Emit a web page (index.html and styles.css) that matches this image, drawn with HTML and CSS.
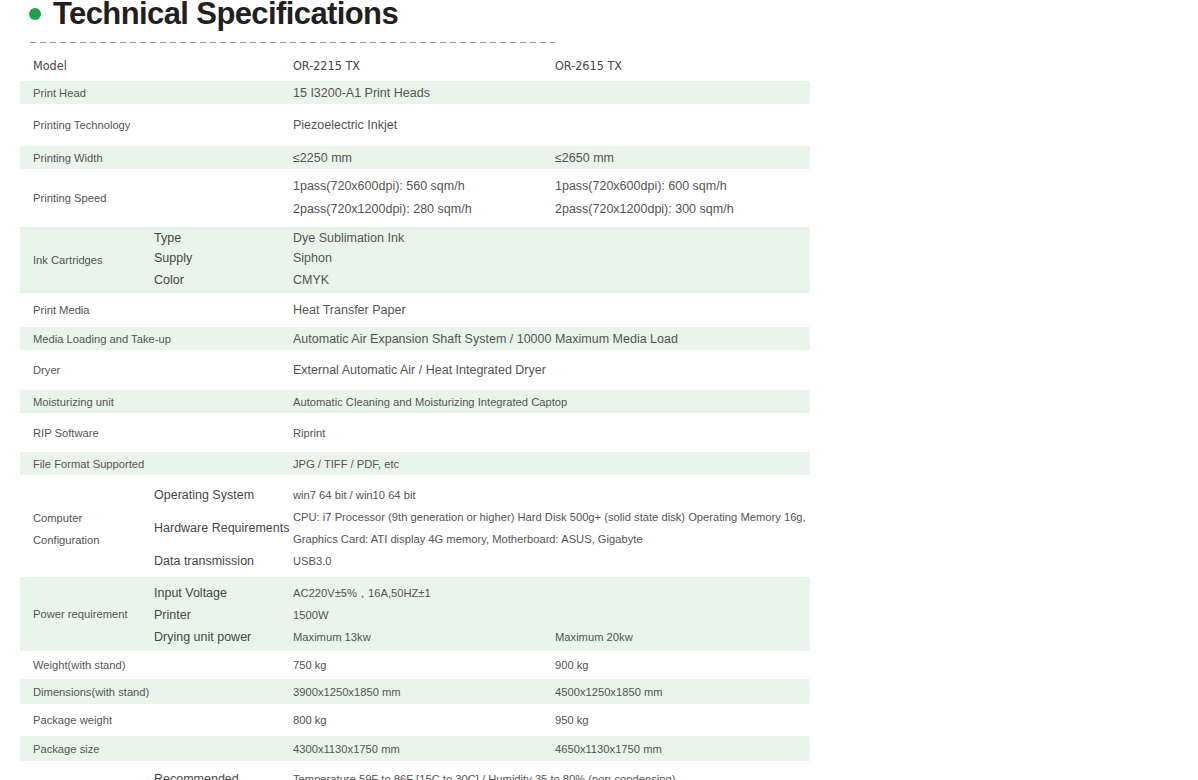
FILE: index.html
```html
<!DOCTYPE html>
<html lang="en">
<head>
<meta charset="utf-8">
<title>Technical Specifications</title>
<link rel="stylesheet" href="styles.css">
</head>
<body>
<header class="head">
  <span class="dot"></span>
  <h1 class="title">Technical Specifications</h1>
</header>
<div class="rule"></div>
<table class="spec">
  <colgroup>
    <col class="c-label"><col class="c-sub"><col class="c-val"><col class="c-val2">
  </colgroup>
  <tbody>
    <tr class="r-model">
      <td colspan="2" class="lbl">Model</td>
      <td class="val">OR-2215 TX</td>
      <td class="val2">OR-2615 TX</td>
    </tr>
    <tr class="g r23">
      <td colspan="2" class="lbl">Print Head</td>
      <td colspan="2" class="val lg">15 I3200-A1 Print Heads</td>
    </tr>
    <tr class="r42">
      <td colspan="2" class="lbl">Printing Technology</td>
      <td colspan="2" class="val lg">Piezoelectric Inkjet</td>
    </tr>
    <tr class="g r23">
      <td colspan="2" class="lbl">Printing Width</td>
      <td class="val lg">≤2250 mm</td>
      <td class="val2 lg">≤2650 mm</td>
    </tr>
    <tr class="r58 two">
      <td colspan="2" class="lbl">Printing Speed</td>
      <td class="val lg">1pass(720x600dpi): 560 sqm/h<br>2pass(720x1200dpi): 280 sqm/h</td>
      <td class="val2 lg">1pass(720x600dpi): 600 sqm/h<br>2pass(720x1200dpi): 300 sqm/h</td>
    </tr>
    <tr class="g r21">
      <td rowspan="3" class="lbl">Ink Cartridges</td>
      <td class="sub">Type</td>
      <td colspan="2" class="val lg">Dye Sublimation Ink</td>
    </tr>
    <tr class="g r19">
      <td class="sub">Supply</td>
      <td colspan="2" class="val lg">Siphon</td>
    </tr>
    <tr class="g r26">
      <td class="sub">Color</td>
      <td colspan="2" class="val lg">CMYK</td>
    </tr>
    <tr class="r34">
      <td colspan="2" class="lbl">Print Media</td>
      <td colspan="2" class="val lg">Heat Transfer Paper</td>
    </tr>
    <tr class="g r23">
      <td colspan="2" class="lbl">Media Loading and Take-up</td>
      <td colspan="2" class="val lg">Automatic Air Expansion Shaft System / 10000 Maximum Media Load</td>
    </tr>
    <tr class="r40">
      <td colspan="2" class="lbl">Dryer</td>
      <td colspan="2" class="val lg">External Automatic Air / Heat Integrated Dryer</td>
    </tr>
    <tr class="g r23">
      <td colspan="2" class="lbl">Moisturizing unit</td>
      <td colspan="2" class="val">Automatic Cleaning and Moisturizing Integrated Captop</td>
    </tr>
    <tr class="r39">
      <td colspan="2" class="lbl">RIP Software</td>
      <td colspan="2" class="val">Riprint</td>
    </tr>
    <tr class="g r23">
      <td colspan="2" class="lbl">File Format Supported</td>
      <td colspan="2" class="val">JPG / TIFF / PDF, etc</td>
    </tr>
    <tr class="r31 lines bottom">
      <td rowspan="3" class="lbl group">Computer<br>Configuration</td>
      <td class="sub">Operating System</td>
      <td colspan="2" class="val">win7 64 bit / win10 64 bit</td>
    </tr>
    <tr class="r44 lines">
      <td class="sub">Hardware Requirements</td>
      <td colspan="2" class="val">CPU: i7 Processor (9th generation or higher) Hard Disk 500g+ (solid state disk) Operating Memory 16g,<br>Graphics Card: ATI display 4G memory, Motherboard: ASUS, Gigabyte</td>
    </tr>
    <tr class="r27 lines top">
      <td class="sub">Data transmission</td>
      <td colspan="2" class="val">USB3.0</td>
    </tr>
    <tr class="g r27 lines bottom">
      <td rowspan="3" class="lbl">Power requirement</td>
      <td class="sub">Input Voltage</td>
      <td colspan="2" class="val">AC220V±5%，16A,50HZ±1</td>
    </tr>
    <tr class="g r22 lines">
      <td class="sub">Printer</td>
      <td colspan="2" class="val">1500W</td>
    </tr>
    <tr class="g r25 lines top">
      <td class="sub">Drying unit power</td>
      <td class="val">Maximum 13kw</td>
      <td class="val2">Maximum 20kw</td>
    </tr>
    <tr class="r28">
      <td colspan="2" class="lbl">Weight(with stand)</td>
      <td class="val">750 kg</td>
      <td class="val2">900 kg</td>
    </tr>
    <tr class="g r25">
      <td colspan="2" class="lbl">Dimensions(with stand)</td>
      <td class="val">3900x1250x1850 mm</td>
      <td class="val2">4500x1250x1850 mm</td>
    </tr>
    <tr class="r32">
      <td colspan="2" class="lbl">Package weight</td>
      <td class="val">800 kg</td>
      <td class="val2">950 kg</td>
    </tr>
    <tr class="g r25">
      <td colspan="2" class="lbl">Package size</td>
      <td class="val">4300x1130x1750 mm</td>
      <td class="val2">4650x1130x1750 mm</td>
    </tr>
    <tr class="r36 env">
      <td rowspan="2" class="lbl">Working Environment</td>
      <td class="sub">Recommended</td>
      <td colspan="2" class="val">Temperature 59F to 86F [15C to 30C] / Humidity 35 to 80% (non-condensing)</td>
    </tr>
    <tr class="r28">
      <td class="sub">Allowable</td>
      <td colspan="2" class="val">Temperature 59F to 95F [15C to 35C] / Humidity 30 to 80%</td>
    </tr>
  </tbody>
</table>
</body>
</html>
```

FILE: styles.css
```css
html, body {
  margin: 0;
  padding: 0;
  background: #ffffff;
}

body {
  font-family: "Liberation Sans", Arial, sans-serif;
  color: #555555;
}

.head {
  display: flex;
  align-items: center;
  gap: 12px;
  height: 30px;
  margin-top: -1px;
  padding-left: 29px;
}

.dot {
  width: 12px;
  height: 12px;
  border-radius: 50%;
  background: #1ea34a;
  flex: none;
}

.title {
  margin: 0;
  font-size: 31px;
  line-height: 30px;
  font-weight: bold;
  letter-spacing: -0.6px;
  color: #231f20;
}

.rule {
  width: 525px;
  height: 1px;
  margin: 13px 0 0 30px;
  background: repeating-linear-gradient(90deg, #9a9a9a 0 6px, transparent 6px 10px);
}

.spec {
  margin: 7px 0 0 20px;
  width: 790px;
  table-layout: fixed;
  border-collapse: collapse;
  border-spacing: 0;
  font-size: 11.2px;
  line-height: 16px;
}

.c-label { width: 130px; }
.c-sub { width: 139px; }
.c-val { width: 262px; }
.c-val2 { width: 259px; }

.spec td {
  padding: 0;
  vertical-align: middle;
  white-space: nowrap;
}

.spec .lbl { padding-left: 13px; }
.spec .sub { padding-left: 4px; font-size: 12.5px; color: #474747; }
.spec .val { padding-left: 4px; }
.spec .val2 { padding-left: 4px; }
.spec .lg { font-size: 12.5px; }

.g { background: #e9f4ea; }

.r-model { height: 31px; }
.r-model td {
  font-family: "Liberation Sans Narrow", "DejaVu Sans Condensed", "Liberation Sans", sans-serif;
  font-size: 12.5px;
  color: #474747;
}

.r19 { height: 19px; }
.r21 { height: 21px; }
.r22 { height: 22px; }
.r23 { height: 23px; }
.r25 { height: 25px; }
.r26 { height: 26px; }
.r27 { height: 27px; }
.r28 { height: 28px; }
.r31 { height: 31px; }
.r32 { height: 32px; }
.r34 { height: 34px; }
.r36 { height: 36px; }
.r39 { height: 39px; }
.r40 { height: 40px; }
.r42 { height: 42px; }
.r44 { height: 44px; }
.r58 { height: 58px; }

.two td { line-height: 23px; }
.lines td { line-height: 22px; }
.lines.bottom td { vertical-align: bottom; }
.lines.top td { vertical-align: top; }
.spec .lines td.lbl { vertical-align: middle; }
.spec td.group { padding-top: 6px; }

.env td { vertical-align: top; padding-top: 10px; }
.spec .env td.lbl { vertical-align: middle; padding-top: 0; }
```
